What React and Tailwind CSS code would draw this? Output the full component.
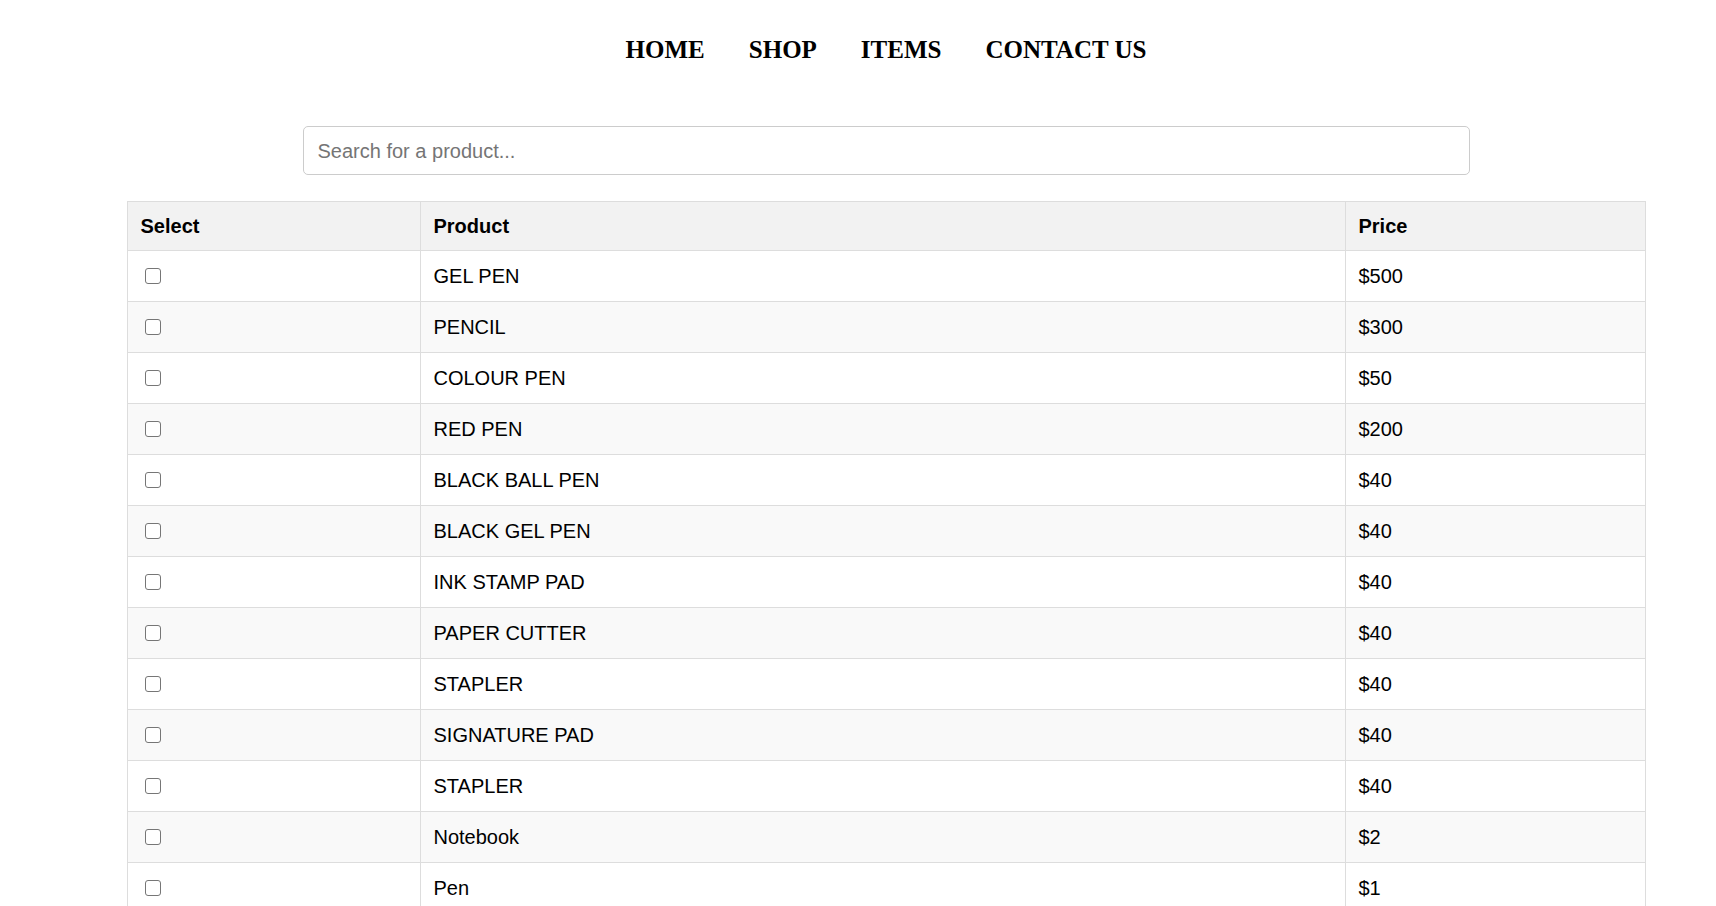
const products = [
  { name: "GEL PEN", price: "$500" },
  { name: "PENCIL", price: "$300" },
  { name: "COLOUR PEN", price: "$50" },
  { name: "RED PEN", price: "$200" },
  { name: "BLACK BALL PEN", price: "$40" },
  { name: "BLACK GEL PEN", price: "$40" },
  { name: "INK STAMP PAD", price: "$40" },
  { name: "PAPER CUTTER", price: "$40" },
  { name: "STAPLER", price: "$40" },
  { name: "SIGNATURE PAD", price: "$40" },
  { name: "STAPLER", price: "$40" },
  { name: "Notebook", price: "$2" },
  { name: "Pen", price: "$1" },
];

export default function App() {
  return (
    <div className="min-h-screen bg-white pl-[56px] text-black font-['Liberation_Sans',Arial,sans-serif]">
      <nav className="flex justify-center gap-[44px] pt-[37px] font-['Liberation_Serif','Times_New_Roman',serif] text-[25px] font-bold leading-none">
        <a href="#">HOME</a>
        <a href="#">SHOP</a>
        <a href="#">ITEMS</a>
        <a href="#">CONTACT US</a>
      </nav>

      <div className="mt-[64px] flex justify-center">
        <input
          type="text"
          placeholder="Search for a product..."
          className="h-[49px] w-[1167px] rounded-[5px] border border-[#cccccc] pl-[14px] pr-[13px] pt-[2px] text-[20px] outline-none placeholder:text-[#757575]"
        />
      </div>

      <div className="mt-[26px] flex justify-center">
        <div className="w-[1519px] border border-b-0 border-[#dddddd] text-[20px]">
          <div className="grid h-[49px] grid-cols-[292px_925px_300px] border-b border-[#dddddd] bg-[#f2f2f2] font-bold">
            <div className="flex items-center px-[13px]">Select</div>
            <div className="flex items-center border-l border-[#dddddd] px-[13px]">Product</div>
            <div className="flex items-center border-l border-[#dddddd] px-[13px]">Price</div>
          </div>
          {products.map((p, i) => (
            <div
              key={i}
              className={`grid h-[51px] grid-cols-[292px_925px_300px] border-b border-[#dddddd] ${
                i % 2 === 1 ? "bg-[#f9f9f9]" : "bg-white"
              }`}
            >
              <div className="flex items-center px-[13px]">
                <input
                  type="checkbox"
                  className="ml-[4px] h-[16px] w-[16px] appearance-none rounded-[3px] border border-[#767676] bg-white"
                />
              </div>
              <div className="flex items-center border-l border-[#dddddd] px-[13px]">{p.name}</div>
              <div className="flex items-center border-l border-[#dddddd] px-[13px]">{p.price}</div>
            </div>
          ))}
        </div>
      </div>
    </div>
  );
}
